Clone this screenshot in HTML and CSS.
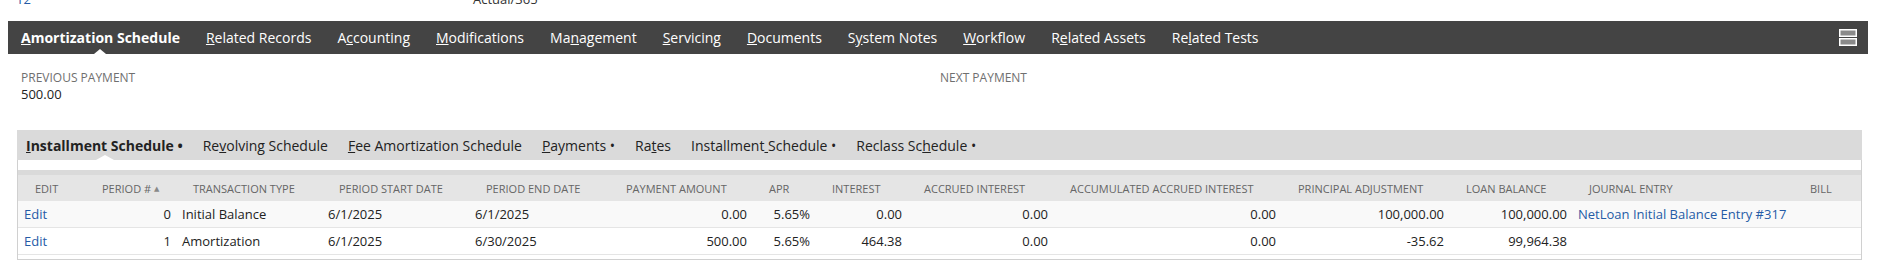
FILE: index.html
```html
<!DOCTYPE html>
<html>
<head>
  <meta charset="UTF-8">
  <title>Loan - Amortization Schedule</title>
  <link rel="stylesheet" href="styles.css">
</head>
<body>
  <div class="field-peek">
    <span class="peek-link">12</span>
    <span class="peek-text">Actual/365</span>
  </div>

  <div class="tab-bar">
    <ul class="tabs">
      <li class="tab active"><u>A</u>mortization Schedule</li>
      <li class="tab"><u>R</u>elated Records</li>
      <li class="tab">A<u>c</u>counting</li>
      <li class="tab"><u>M</u>odifications</li>
      <li class="tab">Ma<u>n</u>agement</li>
      <li class="tab"><u>S</u>ervicing</li>
      <li class="tab"><u>D</u>ocuments</li>
      <li class="tab">S<u>y</u>stem Notes</li>
      <li class="tab"><u>W</u>orkflow</li>
      <li class="tab">R<u>e</u>lated Assets</li>
      <li class="tab">Re<u>l</u>ated Tests</li>
    </ul>
    <button class="tab-menu" type="button">
      <svg width="18" height="17" viewBox="0 0 18 17">
        <rect x="0.75" y="0.75" width="16.5" height="6.5" fill="#8a8a8a" stroke="#fff" stroke-width="1.5"/>
        <rect x="0.75" y="9.75" width="16.5" height="6.5" fill="#8a8a8a" stroke="#fff" stroke-width="1.5"/>
      </svg>
    </button>
  </div>

  <div class="fields">
    <div class="field">
      <div class="field-label">Previous Payment</div>
      <div class="field-value">500.00</div>
    </div>
    <div class="field">
      <div class="field-label">Next Payment</div>
      <div class="field-value"></div>
    </div>
  </div>

  <ul class="subtabs">
    <li class="subtab active"><u>I</u>nstallment Schedule •</li>
    <li class="subtab">Re<u>v</u>olving Schedule</li>
    <li class="subtab"><u>F</u>ee Amortization Schedule</li>
    <li class="subtab"><u>P</u>ayments •</li>
    <li class="subtab">Ra<u>t</u>es</li>
    <li class="subtab">Installment<u> </u>Schedule •</li>
    <li class="subtab">Reclass Sc<u>h</u>edule •</li>
  </ul>

  <div class="sublist">
    <table class="sublist-table">
      <colgroup>
        <col style="width:67px"><col style="width:91px"><col style="width:146px"><col style="width:147px">
        <col style="width:140px"><col style="width:143px"><col style="width:63px"><col style="width:92px">
        <col style="width:146px"><col style="width:228px"><col style="width:168px"><col style="width:123px">
        <col style="width:221px"><col style="width:68px">
      </colgroup>
      <thead>
        <tr>
          <th>Edit</th>
          <th>Period # <span class="sort-arrow">▲</span></th>
          <th>Transaction Type</th>
          <th>Period Start Date</th>
          <th>Period End Date</th>
          <th>Payment Amount</th>
          <th>APR</th>
          <th>Interest</th>
          <th>Accrued Interest</th>
          <th>Accumulated Accrued Interest</th>
          <th>Principal Adjustment</th>
          <th>Loan Balance</th>
          <th>Journal Entry</th>
          <th>Bill</th>
        </tr>
      </thead>
      <tbody>
        <tr class="row-odd">
          <td><a class="link">Edit</a></td>
          <td class="num">0</td>
          <td>Initial Balance</td>
          <td>6/1/2025</td>
          <td>6/1/2025</td>
          <td class="num">0.00</td>
          <td class="num">5.65%</td>
          <td class="num">0.00</td>
          <td class="num">0.00</td>
          <td class="num">0.00</td>
          <td class="num">100,000.00</td>
          <td class="num">100,000.00</td>
          <td><a class="link">NetLoan Initial Balance Entry #317</a></td>
          <td></td>
        </tr>
        <tr>
          <td><a class="link">Edit</a></td>
          <td class="num">1</td>
          <td>Amortization</td>
          <td>6/1/2025</td>
          <td>6/30/2025</td>
          <td class="num">500.00</td>
          <td class="num">5.65%</td>
          <td class="num">464.38</td>
          <td class="num">0.00</td>
          <td class="num">0.00</td>
          <td class="num">-35.62</td>
          <td class="num">99,964.38</td>
          <td></td>
          <td></td>
        </tr>
      </tbody>
    </table>
  </div>
</body>
</html>
```

FILE: styles.css
```css
body {
  font-family: "Open Sans", "Liberation Sans", Arial, sans-serif;
  margin: 0;
  background: white;
  color: #222;
  font-size: 13px;
}

u {
  text-decoration: underline;
}

.field-peek {
  display: grid;
  grid-template-columns: 457px auto;
  padding-left: 16px;
  margin-top: -9px;
  line-height: 16px;
  font-size: 13px;
}

.peek-link {
  color: #255ba6;
}

.peek-text {
  color: #333;
}

.tab-bar {
  display: flex;
  justify-content: space-between;
  align-items: center;
  height: 33px;
  margin: 14px 18px 0 8px;
  background: #444;
}

.tabs {
  display: flex;
  list-style: none;
  margin: 0;
  padding: 0;
}

.tab {
  position: relative;
  padding: 1px 13px 0;
  line-height: 32px;
  font-size: 14px;
  color: white;
  white-space: nowrap;
}

.tab.active {
  font-weight: bold;
}

.tab.active::after {
  content: "";
  position: absolute;
  left: 50%;
  bottom: 0;
  margin-left: -6px;
  border-left: 6px solid transparent;
  border-right: 6px solid transparent;
  border-bottom: 5px solid white;
}

.tab-menu {
  display: flex;
  padding: 0;
  margin-right: 11px;
  border: none;
  background: none;
}

.fields {
  display: grid;
  grid-template-columns: 919px 1fr;
  padding-left: 21px;
  margin-top: 16px;
}

.field-label {
  font-size: 12px;
  line-height: 16px;
  text-transform: uppercase;
  color: #6f6f6f;
}

.field-value {
  font-size: 13px;
  line-height: 17px;
  color: #222;
  min-height: 17px;
}

.subtabs {
  display: flex;
  list-style: none;
  margin: 27px 24px 0 17px;
  padding: 0;
  height: 30px;
  background: #dadada;
}

.subtab {
  position: relative;
  padding: 1px 10px 0;
  line-height: 29px;
  font-size: 14px;
  color: #222;
  white-space: nowrap;
}

.subtab:first-child {
  padding-left: 9px;
}

.subtab.active {
  font-weight: bold;
}

.subtab.active::after {
  content: "";
  position: absolute;
  left: 50%;
  bottom: 0;
  margin-left: -9px;
  border-left: 9px solid transparent;
  border-right: 9px solid transparent;
  border-bottom: 5px solid white;
}

.sublist {
  margin: 0 24px 0 17px;
  padding: 10px 0 4px;
  border: 1px solid #d0d0d0;
  border-top: none;
}

.sublist-table {
  width: 100%;
  table-layout: fixed;
  border-collapse: collapse;
  border-top: 5px solid #dadada;
}

.sublist-table th {
  height: 26px;
  padding: 0 5px 0 17px;
  background: #e5e5e5;
  font-size: 11px;
  font-weight: normal;
  text-align: left;
  text-transform: uppercase;
  color: #666;
  white-space: nowrap;
}

.sort-arrow {
  font-family: "DejaVu Sans", sans-serif;
  font-size: 7px;
  color: #888;
  vertical-align: 2px;
}

.sublist-table td {
  height: 26px;
  padding: 0 5px 0 6px;
  border-bottom: 1px solid #e5e5e5;
  white-space: nowrap;
}

.row-odd td {
  background: #f9f9f9;
}

.sublist-table td.num {
  text-align: right;
}

.link {
  color: #255ba6;
  text-decoration: none;
}
```
